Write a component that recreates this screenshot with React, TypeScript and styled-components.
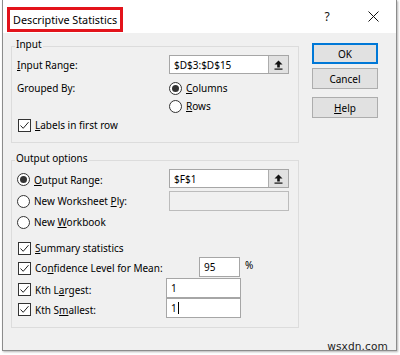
import React from 'react';
import styled, { createGlobalStyle } from 'styled-components';

const GlobalStyle = createGlobalStyle`
  html, body {
    margin: 0;
    padding: 0;
    background: #ffffff;
  }
  body {
    font-family: "Noto Sans", "Open Sans", sans-serif;
    font-size: 10px;
    color: #000;
  }
`;

const Page = styled.div`
  position: relative;
  width: 400px;
  height: 355px;
  overflow: hidden;
  padding-left: 2px;
  box-sizing: border-box;
`;

const Dialog = styled.div`
  width: 395px;
  height: 351px;
  box-sizing: border-box;
  border: 1px solid #8c8c8c;
  border-top: none;
  background: #f0f0f0;
  box-shadow: 1px 1px 2px rgba(0, 0, 0, 0.3);
  display: flex;
  flex-direction: column;
`;

const TitleBar = styled.div`
  height: 33px;
  flex-shrink: 0;
  background: #ffffff;
  display: flex;
  align-items: flex-end;
  padding: 0 0 1px 4px;
  box-sizing: border-box;
`;

const TitleLabel = styled.div`
  height: 25px;
  box-sizing: border-box;
  border: 3px solid #e3131b;
  padding: 0 3px;
  display: flex;
  align-items: center;
  font-size: 10.8px;
  white-space: nowrap;
`;

const TitleButtons = styled.div`
  margin-left: auto;
  align-self: stretch;
  display: flex;
`;

const TitleButton = styled.div`
  width: 46px;
  display: flex;
  align-items: center;
  justify-content: center;
  font-size: 12px;
  color: #111;
`;

const Body = styled.div`
  display: grid;
  grid-template-columns: 288px 66px;
  column-gap: 13px;
  padding: 4px 0 0 8px;
  align-items: start;
`;

const Groups = styled.div`
  display: flex;
  flex-direction: column;
  gap: 8px;
`;

const Group = styled.fieldset`
  margin: 0;
  min-width: 0;
  border: 1px solid #dcdcdc;
  padding: 0 9px 9px 5px;
`;

const Legend = styled.legend`
  padding: 0 1px 4px;
  margin-left: -2px;
  line-height: 14px;
`;

const Row = styled.div<{ $cols: string; $h: number; $mt?: number }>`
  display: grid;
  grid-template-columns: ${p => p.$cols};
  align-items: center;
  height: ${p => p.$h}px;
  margin-top: ${p => p.$mt ?? 0}px;
`;

const Label = styled.span<{ $shift?: number }>`
  display: flex;
  align-items: center;
  gap: 4px;
  white-space: nowrap;
  line-height: 14px;
  margin-top: ${p => (p.$shift ?? 0) * 2}px;
`;

const Key = styled.u`
  text-decoration-thickness: 1px;
  text-underline-offset: 1px;
`;

const Circle = styled.span<{ $on?: boolean }>`
  width: 13px;
  height: 13px;
  box-sizing: border-box;
  border: 1px solid #333;
  border-radius: 50%;
  background: #fff;
  display: inline-flex;
  align-items: center;
  justify-content: center;
  flex-shrink: 0;
  &::after {
    content: '';
    width: 7px;
    height: 7px;
    border-radius: 50%;
    background: #333;
    display: ${p => (p.$on ? 'block' : 'none')};
  }
`;

const Box = styled.span`
  width: 13px;
  height: 13px;
  box-sizing: border-box;
  border: 1px solid #333;
  background: #fff;
  display: inline-flex;
  align-items: center;
  justify-content: center;
  flex-shrink: 0;
  margin-left: 1px;
`;

const TextBox = styled.div<{ $w: number; $h?: number; $disabled?: boolean }>`
  width: ${p => p.$w}px;
  height: ${p => p.$h ?? 20}px;
  box-sizing: border-box;
  border: 1px solid ${p => (p.$disabled ? '#bcbcbc' : '#a6a6a6')};
  background: ${p => (p.$disabled ? '#f0f0f0' : '#ffffff')};
  display: flex;
  align-items: center;
  padding-left: 4px;
  white-space: nowrap;
`;

const RefButton = styled.div`
  margin-left: auto;
  width: 20px;
  height: 100%;
  box-sizing: border-box;
  border-left: 1px solid #adadad;
  background: #e1e1e1;
  display: flex;
  align-items: center;
  justify-content: center;
`;

const Caret = styled.span`
  display: inline-block;
  width: 1px;
  height: 12px;
  background: #000;
  margin-left: 1px;
`;

const Percent = styled.span`
  margin-left: 5px;
  align-self: start;
  margin-top: 1px;
`;

const InlineBox = styled.div`
  display: flex;
  align-items: center;
`;

const ButtonColumn = styled.div`
  display: flex;
  flex-direction: column;
  margin-top: 6px;
`;

const DialogButton = styled.div<{ $focused?: boolean; $mt?: number }>`
  height: 21px;
  box-sizing: border-box;
  margin-top: ${p => p.$mt ?? 0}px;
  border: ${p => (p.$focused ? '2px solid #0078d7' : '1px solid #adadad')};
  background: #e1e1e1;
  display: flex;
  align-items: center;
  justify-content: center;
`;

const Watermark = styled.div`
  position: absolute;
  right: 12px;
  bottom: 3px;
  font-family: "DejaVu Sans", Verdana, sans-serif;
  font-size: 10.6px;
  color: #1e1e1e;
  letter-spacing: 0.1px;
`;

const UpArrow = () => (
  <svg width="9" height="10" viewBox="0 0 9 10">
    <path d="M4.5 0.5 L8.5 4.5 L5.8 4.5 L5.8 7.5 L3.2 7.5 L3.2 4.5 L0.5 4.5 Z" fill="#111" />
    <rect x="0.5" y="8.5" width="8" height="1.2" fill="#111" />
  </svg>
);

const Tick = () => (
  <svg width="11" height="11" viewBox="0 0 11 11">
    <polyline points="1.5,5.5 4.2,8.3 9.5,2.2" fill="none" stroke="#222" strokeWidth="1" />
  </svg>
);

const CloseIcon = () => (
  <svg width="11" height="11" viewBox="0 0 11 11">
    <path d="M0.5 0.5 L10.5 10.5 M10.5 0.5 L0.5 10.5" stroke="#111" strokeWidth="1" />
  </svg>
);

const Radio: React.FC<{ on?: boolean; shift?: number; children: React.ReactNode }> = ({ on, shift, children }) => (
  <Label $shift={shift}>
    <Circle $on={on} />
    <span>{children}</span>
  </Label>
);

const Check: React.FC<{ shift?: number; children: React.ReactNode }> = ({ shift, children }) => (
  <Label $shift={shift}>
    <Box>
      <Tick />
    </Box>
    <span>{children}</span>
  </Label>
);

export default function App() {
  return (
    <>
      <GlobalStyle />
      <Page>
        <Dialog>
          <TitleBar>
            <TitleLabel>Descriptive Statistics</TitleLabel>
            <TitleButtons>
              <TitleButton>?</TitleButton>
              <TitleButton>
                <CloseIcon />
              </TitleButton>
            </TitleButtons>
          </TitleBar>

          <Body>
            <Groups>
              <Group>
                <Legend>Input</Legend>
                <Row $cols="152px 120px" $h={19}>
                  <Label>
                    <span><Key>I</Key>nput Range:</span>
                  </Label>
                  <TextBox $w={120} $h={19}>
                    $D$3:$D$15
                    <RefButton>
                      <UpArrow />
                    </RefButton>
                  </TextBox>
                </Row>
                <Row $cols="152px 120px" $h={16} $mt={6}>
                  <Label>Grouped By:</Label>
                  <Radio on>
                    <Key>C</Key>olumns
                  </Radio>
                </Row>
                <Row $cols="152px 120px" $h={16} $mt={2}>
                  <span />
                  <Radio>
                    <Key>R</Key>ows
                  </Radio>
                </Row>
                <Row $cols="1fr" $h={16} $mt={3}>
                  <Check>
                    <Key>L</Key>abels in first row
                  </Check>
                </Row>
              </Group>

              <Group>
                <Legend>Output options</Legend>
                <Row $cols="152px 120px" $h={19}>
                  <Radio on shift={1}>
                    <Key>O</Key>utput Range:
                  </Radio>
                  <TextBox $w={120} $h={19}>
                    $F$1
                    <RefButton>
                      <UpArrow />
                    </RefButton>
                  </TextBox>
                </Row>
                <Row $cols="152px 120px" $h={20} $mt={3}>
                  <Radio>
                    New Worksheet <Key>P</Key>ly:
                  </Radio>
                  <TextBox $w={120} $disabled />
                </Row>
                <Row $cols="1fr" $h={16} $mt={3}>
                  <Radio>
                    New <Key>W</Key>orkbook
                  </Radio>
                </Row>
                <Row $cols="1fr" $h={16} $mt={10}>
                  <Check>
                    <Key>S</Key>ummary statistics
                  </Check>
                </Row>
                <Row $cols="182px 1fr" $h={20} $mt={1}>
                  <Check shift={1}>
                    Co<Key>n</Key>fidence Level for Mean:
                  </Check>
                  <InlineBox>
                    <TextBox $w={41}>95</TextBox>
                    <Percent>%</Percent>
                  </InlineBox>
                </Row>
                <Row $cols="149px 75px" $h={20} $mt={1}>
                  <Check shift={1.5}>
                    Kth L<Key>a</Key>rgest:
                  </Check>
                  <TextBox $w={75}>1</TextBox>
                </Row>
                <Row $cols="149px 75px" $h={20}>
                  <Check shift={1.5}>
                    Kth S<Key>m</Key>allest:
                  </Check>
                  <TextBox $w={75}>
                    1<Caret />
                  </TextBox>
                </Row>
              </Group>
            </Groups>

            <ButtonColumn>
              <DialogButton $focused>OK</DialogButton>
              <DialogButton $mt={4}>Cancel</DialogButton>
              <DialogButton $mt={8}>
                <span><Key>H</Key>elp</span>
              </DialogButton>
            </ButtonColumn>
          </Body>
        </Dialog>
        <Watermark>wsxdn.com</Watermark>
      </Page>
    </>
  );
}
